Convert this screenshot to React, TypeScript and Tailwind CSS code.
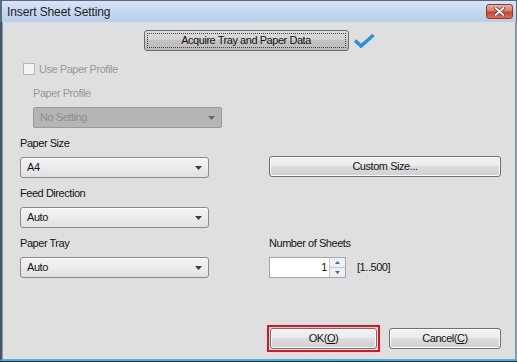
import React from "react";

const font = { fontFamily: '"Liberation Sans", Arial, sans-serif' };

function Arrow({ color = "#3c3c3c" }: { color?: string }) {
  return (
    <svg width="7" height="4" viewBox="0 0 7 4">
      <path d="M0 0 L7 0 L3.5 4 Z" fill={color} />
    </svg>
  );
}

function Dropdown({ value }: { value: string }) {
  return (
    <div className="flex h-[21px] w-[189px] items-center justify-between rounded-[3px] border border-[#8b8b8b] bg-[linear-gradient(to_bottom,#f3f3f3_0%,#ececec_50%,#e0e0e0_100%)] pl-[6px] pr-[6px] shadow-[inset_0_1px_0_#ffffff]">
      <span className="text-[#141414]">{value}</span>
      <Arrow />
    </div>
  );
}

function Button({ label, className = "" }: { label: React.ReactNode; className?: string }) {
  return (
    <div
      className={`flex h-[21px] items-center justify-center rounded-[3px] border border-[#707070] bg-[linear-gradient(to_bottom,#f2f2f2_0%,#ebebeb_50%,#dddddd_50%,#cfcfcf_100%)] text-[#141414] shadow-[inset_0_0_0_1px_#fbfbfb] ${className}`}
    >
      {label}
    </div>
  );
}

export default function App() {
  return (
    <div
      className="flex h-[362px] w-[517px] flex-col overflow-hidden bg-[#3a4658] text-[11px] tracking-[-0.45px]"
      style={font}
    >
      {/* Title bar */}
      <div className="flex h-[22px] items-center justify-between border-t border-l-2 border-r border-[#5a6a80] bg-[linear-gradient(to_bottom,#d7e5f4_0%,#c5d9ef_50%,#b8cfea_100%)] pl-[5px] pr-[3px]">
        <span className="text-[12px] tracking-[-0.1px] text-[#1c1c1c]">Insert Sheet Setting</span>
        <div className="flex h-[15px] w-[27px] items-center justify-center rounded-[3px] border border-[#8a3b30] bg-[linear-gradient(to_bottom,#eab1a4_0%,#dc7a68_45%,#c8432f_55%,#d9705a_100%)]">
          <svg width="11" height="9" viewBox="0 0 11 9">
            <path d="M1.5 1 L9.5 8 M9.5 1 L1.5 8" stroke="#5a2a22" strokeWidth="3.2" strokeLinecap="round" />
            <path d="M1.5 1 L9.5 8 M9.5 1 L1.5 8" stroke="#ffffff" strokeWidth="1.8" strokeLinecap="round" />
          </svg>
        </div>
      </div>

      {/* Body with frame */}
      <div className="flex flex-1 border-l-[2px] border-l-[#485468] border-r-[2px] border-r-[#8899aa] border-b-[2px] border-b-[#3cb6e6]">
        <div className="flex flex-1 flex-col border-l border-[#8e9cae] bg-[#dfdfdf] text-[#141414]">
          {/* Acquire */}
          <div className="mt-[8px] flex items-center justify-center gap-[4px]">
            <div className="flex h-[21px] w-[205px] items-center justify-center rounded-[3px] border border-[#6a6a6a] bg-[linear-gradient(to_bottom,#dcdcdc_0%,#d2d2d2_50%,#c3c3c3_50%,#bdbdbd_100%)] p-[2px]">
              <div className="flex h-full w-full items-center justify-center border border-dotted border-[#404040]">
                Acquire Tray and Paper Data
              </div>
            </div>
            <svg width="22" height="15" viewBox="0 0 22 15">
              <path d="M2 7.5 L8 13 L20.5 2" stroke="#2f8fdf" strokeWidth="3.6" fill="none" strokeLinejoin="miter" />
            </svg>
          </div>

          {/* Use paper profile */}
          <div className="mt-[12px] flex h-[12px] items-center pl-[20px]">
            <div className="h-[12px] w-[12px] border border-[#b5b5b5] bg-[#f4f4f4]" />
            <span className="ml-[4px] text-[#999999]">Use Paper Profile</span>
          </div>

          <div className="mt-[11px] h-[14px] pl-[30px] leading-[14px] text-[#999999]">Paper Profile</div>
          <div className="ml-[30px] mt-[7px] flex h-[21px] w-[189px] items-center justify-between rounded-[2px] border border-[#9a9a9a] bg-[#b5b5b5] pl-[6px] pr-[6px]">
            <span className="text-[#8e8e8e]">No Setting</span>
            <Arrow color="#6a6a6a" />
          </div>

          <div className="mt-[8px] h-[14px] pl-[17px] leading-[14px]">Paper Size</div>

          <div className="mt-[7px] flex items-start pl-[17px]">
            <Dropdown value="A4" />
            <Button label="Custom Size..." className="ml-[60px] -mt-px w-[232px]" />
          </div>

          <div className="mt-[8px] h-[14px] pl-[17px] leading-[14px]">Feed Direction</div>
          <div className="mt-[7px] pl-[17px]">
            <Dropdown value="Auto" />
          </div>

          <div className="mt-[8px] flex h-[14px] pl-[17px] leading-[14px]">
            <span className="w-[249px]">Paper Tray</span>
            <span>Number of Sheets</span>
          </div>
          <div className="mt-[7px] flex items-start pl-[17px]">
            <Dropdown value="Auto" />
            <div className="ml-[60px] flex h-[21px] w-[77px] items-center border border-[#a5a5a5] bg-white">
              <span className="flex-1 pr-[2px] text-right">1</span>
              <div className="flex h-full w-[16px] flex-col border-l border-[#c8c8c8] bg-[#eef0f3]">
                <div className="flex flex-1 items-center justify-center border-b border-[#c8c8c8]">
                  <svg width="5" height="3" viewBox="0 0 5 3"><path d="M0 3 L5 3 L2.5 0 Z" fill="#3a6ab0" /></svg>
                </div>
                <div className="flex flex-1 items-center justify-center">
                  <svg width="5" height="3" viewBox="0 0 5 3"><path d="M0 0 L5 0 L2.5 3 Z" fill="#3a6ab0" /></svg>
                </div>
              </div>
            </div>
            <span className="ml-[11px] flex h-[21px] items-center">[1..500]</span>
          </div>

          {/* Bottom buttons */}
          <div className="mt-[47px] flex items-center pl-[264px]">
            <div className="h-[27px] w-[113px] border-2 border-[#e8101a] p-[1px]">
              <Button
                label={<span>OK(<span className="underline">O</span>)</span>}
                className="h-[21px] w-full"
              />
            </div>
            <Button
              label={<span>Cancel(<span className="underline">C</span>)</span>}
              className="ml-[9px] w-[112px]"
            />
          </div>
        </div>
      </div>
      <div className="h-px bg-[#1a2230]" />
    </div>
  );
}
